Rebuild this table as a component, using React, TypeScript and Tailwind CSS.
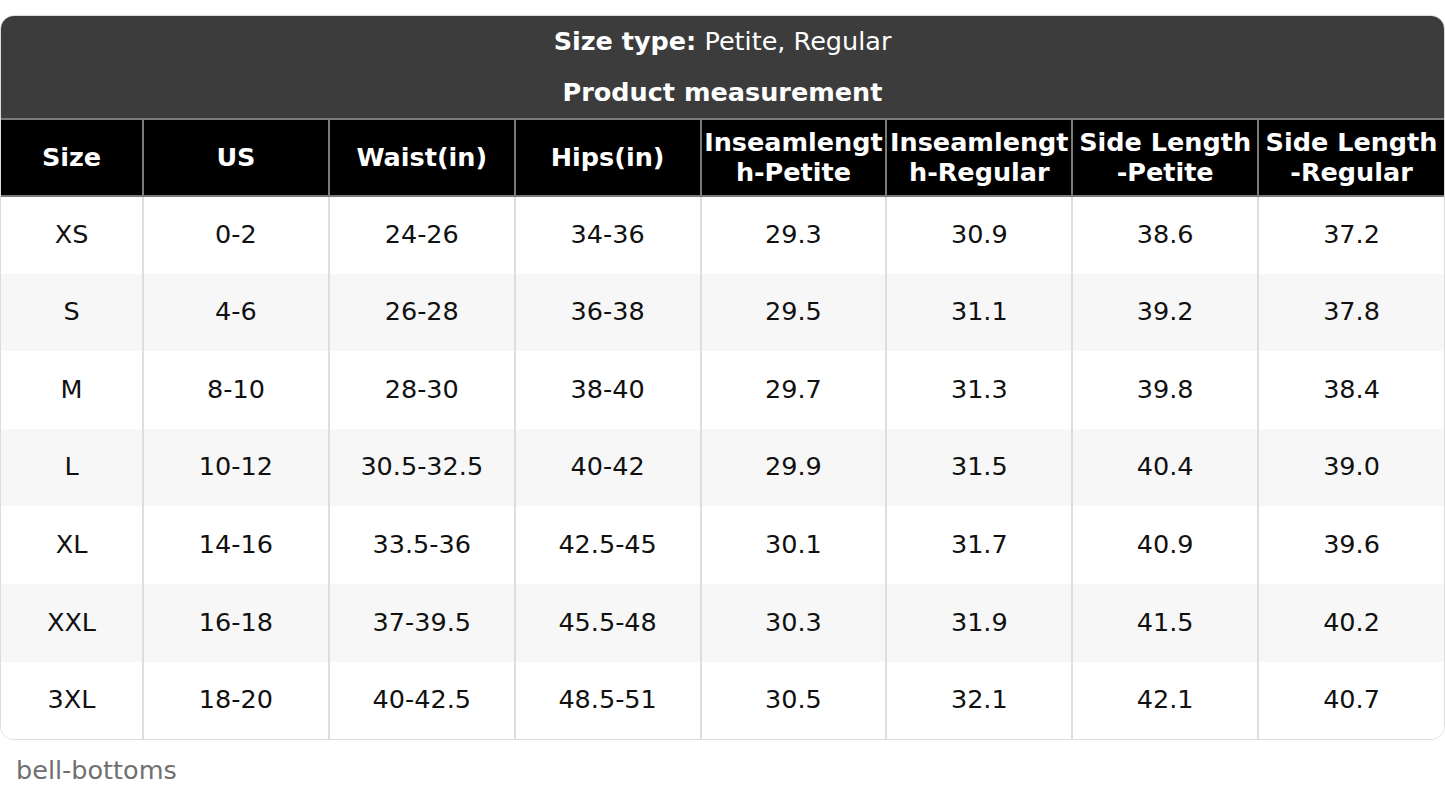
import React from "react";

const rows = [
  ["XS", "0-2", "24-26", "34-36", "29.3", "30.9", "38.6", "37.2"],
  ["S", "4-6", "26-28", "36-38", "29.5", "31.1", "39.2", "37.8"],
  ["M", "8-10", "28-30", "38-40", "29.7", "31.3", "39.8", "38.4"],
  ["L", "10-12", "30.5-32.5", "40-42", "29.9", "31.5", "40.4", "39.0"],
  ["XL", "14-16", "33.5-36", "42.5-45", "30.1", "31.7", "40.9", "39.6"],
  ["XXL", "16-18", "37-39.5", "45.5-48", "30.3", "31.9", "41.5", "40.2"],
  ["3XL", "18-20", "40-42.5", "48.5-51", "30.5", "32.1", "42.1", "40.7"],
];

const headers: React.ReactNode[] = [
  "Size",
  "US",
  "Waist(in)",
  "Hips(in)",
  <>Inseamlengt<br />h-Petite</>,
  <>Inseamlengt<br />h-Regular</>,
  <>Side Length<br />-Petite</>,
  <>Side Length<br />-Regular</>,
];

export default function App() {
  return (
    <div
      className="w-[1445px] h-[800px] bg-white pt-[15px]"
      style={{ fontFamily: '"DejaVu Sans", Verdana, sans-serif' }}
    >
      <div className="rounded-[14px] overflow-hidden border border-[#dcdcdc]">
        <div className="bg-[#3c3c3c] text-white text-[25.5px] h-[102px] flex flex-col items-center">
          <div className="h-[50px] flex items-center">
            <span className="font-bold">Size type:</span>
            <span>&nbsp;Petite, Regular</span>
          </div>
          <div className="h-[52px] flex items-center font-bold">Product measurement</div>
        </div>
        <table className="w-full table-fixed border-collapse text-[25.5px]">
          <colgroup>
            <col className="w-[142px]" />
            <col />
            <col />
            <col />
            <col />
            <col />
            <col />
            <col />
          </colgroup>
          <thead>
            <tr className="h-[77px] bg-black text-white">
              {headers.map((h, i) => (
                <th
                  key={i}
                  className="border-2 border-t-2 border-[#7a7a7a] border-l-0 first:border-l-0 last:border-r-0 px-0 pb-[2px] font-bold leading-[30px] text-center align-middle"
                >
                  {h}
                </th>
              ))}
            </tr>
          </thead>
          <tbody>
            {rows.map((r, ri) => (
              <tr
                key={ri}
                className={`h-[77.6px] ${ri % 2 === 1 ? "bg-[#f7f7f7]" : "bg-white"} text-[#111]`}
              >
                {r.map((c, ci) => (
                  <td
                    key={ci}
                    className="border-r-2 border-[#dedede] last:border-r-0 text-center align-middle p-0 pb-[2px]"
                  >
                    {c}
                  </td>
                ))}
              </tr>
            ))}
          </tbody>
        </table>
      </div>
      <div className="pl-[16px] pt-[15px] text-[25.5px] text-[#707070] leading-[30px]">
        bell-bottoms
      </div>
    </div>
  );
}
